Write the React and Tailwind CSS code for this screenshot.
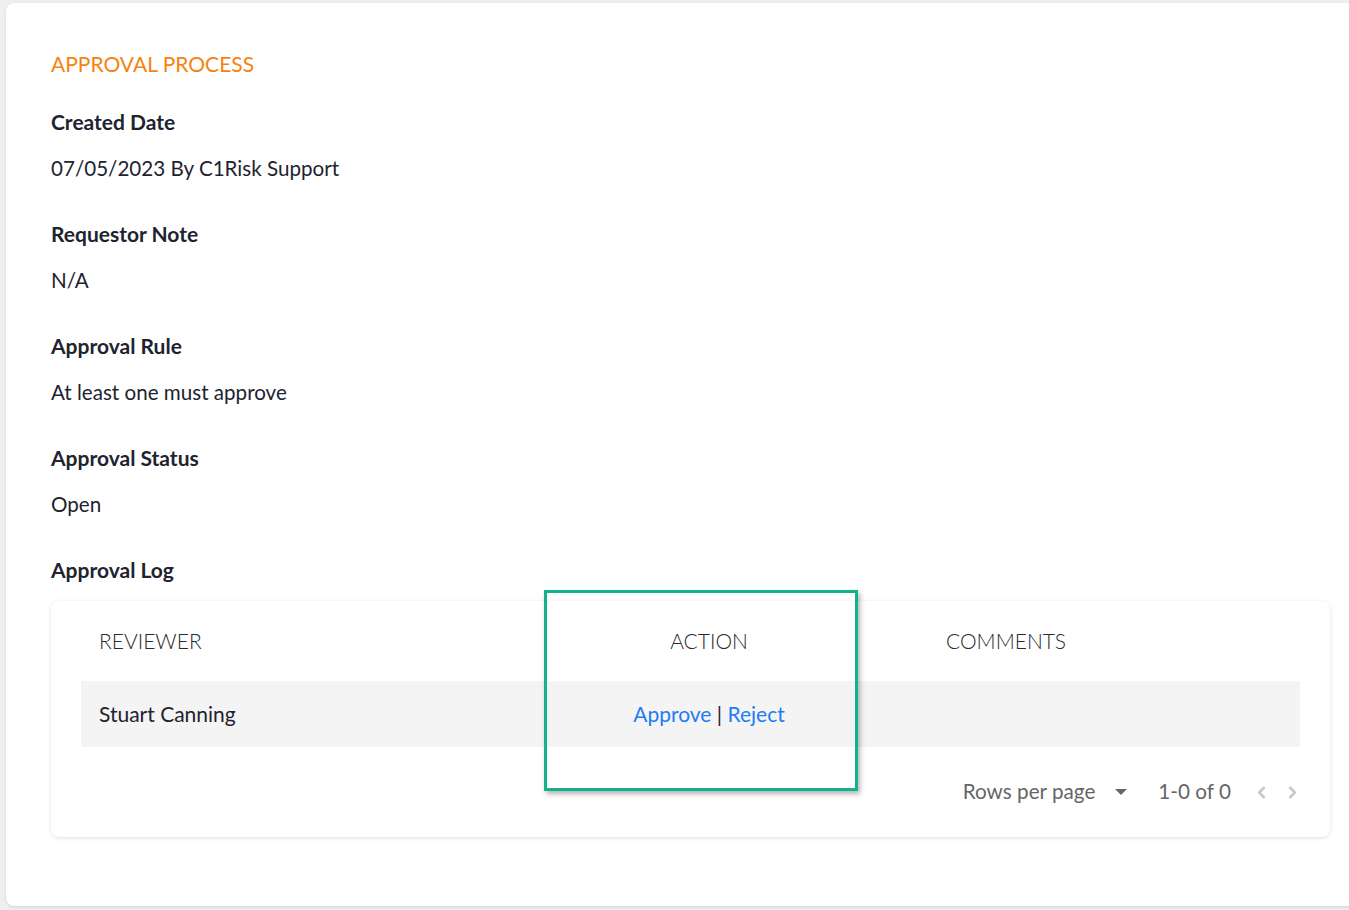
import { ChevronLeft, ChevronRight } from 'lucide-react';

const fields = [
  { label: 'Created Date', value: '07/05/2023 By C1Risk Support' },
  { label: 'Requestor Note', value: 'N/A' },
  { label: 'Approval Rule', value: 'At least one must approve' },
  { label: 'Approval Status', value: 'Open' },
];

export default function App() {
  return (
    <div
      className="relative h-[910px] w-[1349px] overflow-hidden bg-[#efefef]"
      style={{ fontFamily: 'Lato, "Open Sans", sans-serif' }}
    >
      <div className="ml-[6px] mt-[3px] h-[903px] w-[1370px] rounded-[8px] bg-white pl-[45px] pr-[45px] pt-[49px] shadow-[0_1px_3px_rgba(0,0,0,0.12)]">
        <h2 className="text-[21px] leading-[24px] text-[#f7820f]">APPROVAL PROCESS</h2>

        {fields.map((f, i) => (
          <div key={f.label} className={i === 0 ? 'mt-[34px]' : 'mt-[42px]'}>
            <div className="text-[21px] font-bold leading-[24px] text-[#1e2330]">{f.label}</div>
            <div className="mt-[22px] text-[20.6px] leading-[24px] text-[#1e2330]">{f.value}</div>
          </div>
        ))}

        <div className="mt-[42px] text-[21px] font-bold leading-[24px] text-[#1e2330]">Approval Log</div>

        <div className="mt-[19px] w-[1279px] rounded-[8px] bg-white px-[30px] shadow-[0_1px_4px_rgba(0,0,0,0.12)]">
          <div className="grid h-[80px] grid-cols-[440px_376px_1fr] items-center text-[21px] font-light text-[#2a2a2a]">
            <div className="pl-[18px]">REVIEWER</div>
            <div className="text-center">ACTION</div>
            <div className="pl-[49px]">COMMENTS</div>
          </div>
          <div className="grid h-[66px] grid-cols-[440px_376px_1fr] items-center bg-[#f4f4f4] text-[21px] text-[#1e2330]">
            <div className="pl-[18px]">Stuart Canning</div>
            <div className="text-center">
              <span className="text-[#1f7cf4]">Approve</span>
              <span className="text-[#1e2330]"> | </span>
              <span className="text-[#1f7cf4]">Reject</span>
            </div>
            <div />
          </div>
          <div className="flex h-[90px] items-center justify-end text-[20.7px] text-[#666666]">
            <span>Rows per page</span>
            <span className="ml-[20px] mr-[31px] h-0 w-0 border-x-[6.5px] border-t-[6px] border-x-transparent border-t-[#666666]" />
            <span>1-0 of 0</span>
            <ChevronLeft className="ml-[21px] text-[#c8c8c8]" size={19} strokeWidth={3.2} />
            <ChevronRight className="ml-[12px] mr-[-2px] text-[#c8c8c8]" size={19} strokeWidth={3.2} />
          </div>
        </div>
      </div>

      <div className="absolute left-[544px] top-[590px] h-[201px] w-[314px] border-[3px] border-[#12b28c] shadow-[2px_3px_5px_rgba(0,0,0,0.3)]" />
    </div>
  );
}
